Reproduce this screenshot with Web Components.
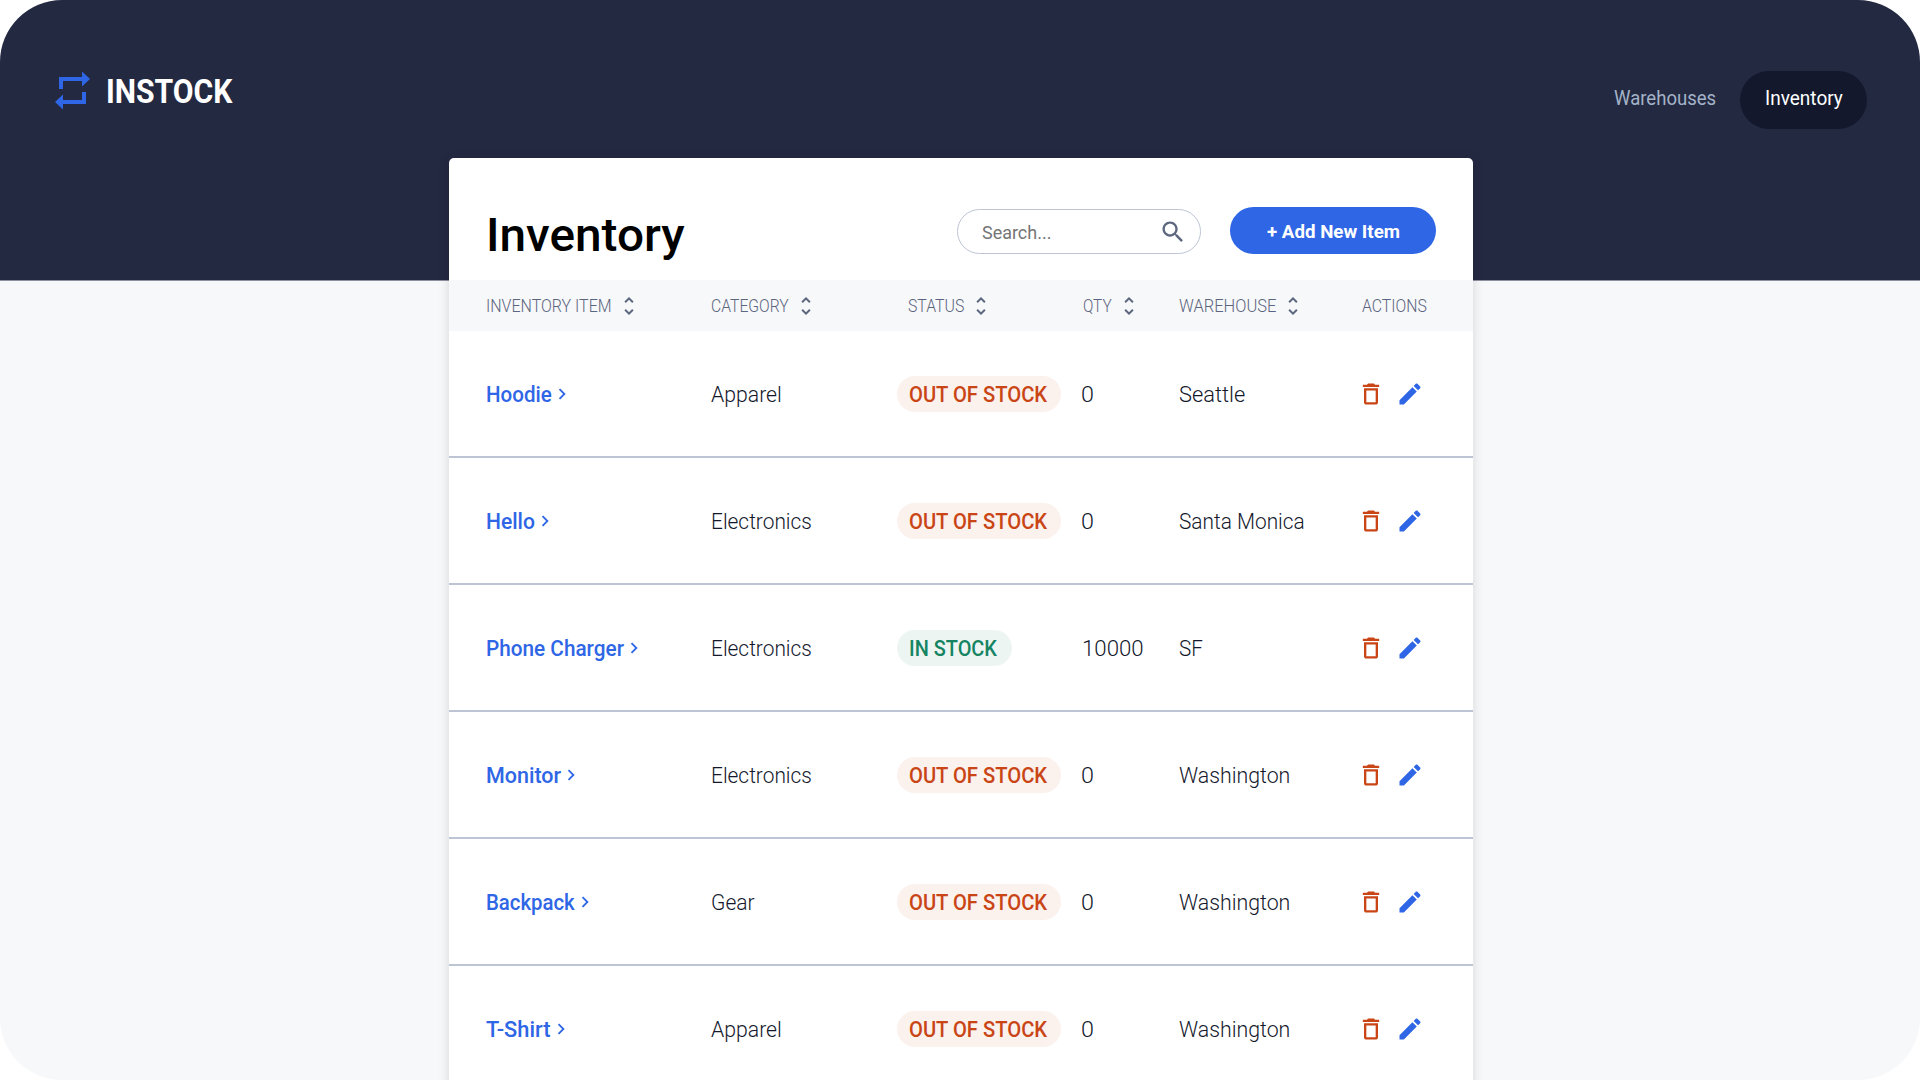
<!DOCTYPE html>
<html lang="en">
<head>
<meta charset="utf-8">
<title>InStock</title>
<style>
html,body{margin:0;height:100%;background:#fff;overflow:hidden}
body{font-family:Roboto,"Liberation Sans",sans-serif}
</style>
</head>
<body>
<instock-app></instock-app>
<script>
const define = (name, html, setup) => customElements.define(name, class extends HTMLElement {
  connectedCallback() {
    if (this.shadowRoot) return;
    const root = this.attachShadow({ mode: 'open' });
    root.innerHTML = typeof html === 'function' ? html(this) : html;
    if (setup) setup(this, root);
  }
});

// Text condensed or widened to an exact measure, given in pixels by "w".
define('fit-text', el => `<style>
:host{display:block;flex:none;width:${el.getAttribute('w')}px;white-space:nowrap;line-height:1.2}
span{display:inline-block;transform-origin:0 50%;vertical-align:top}
</style><span><slot></slot></span>`, (el, root) => {
  const span = root.querySelector('span');
  span.style.transform = `scaleX(${+el.getAttribute('w') / span.offsetWidth})`;
});

const icons = {
  sort: 'M12 5.83L15.17 9l1.41-1.41L12 3 7.41 7.59 8.83 9 12 5.83zm0 12.34L8.83 15l-1.41 1.41L12 21l4.59-4.59L15.17 15 12 18.17z',
  trash: 'M6 19c0 1.1.9 2 2 2h8c1.1 0 2-.9 2-2V7H6v12zM8 9h8v10H8V9zm7.5-5l-1-1h-5l-1 1H5v2h14V4h-3.5z',
  edit: 'M3 17.25V21h3.75L17.81 9.94l-3.75-3.75L3 17.25zM20.71 7.04c.39-.39.39-1.02 0-1.41l-2.34-2.34c-.39-.39-1.02-.39-1.41 0l-1.83 1.83 3.75 3.75 1.83-1.83z',
  chevron: 'M10 6L8.59 7.41 13.17 12l-4.58 4.59L10 18l6-6z',
  search: 'M15.5 14h-.79l-.28-.27C15.41 12.59 16 11.11 16 9.5 16 5.91 13.09 3 9.5 3S3 5.91 3 9.5 5.91 16 9.5 16c1.61 0 3.09-.59 4.23-1.57l.27.28v.79l5 4.99L20.49 19l-4.99-5zm-6 0C7.01 14 5 11.99 5 9.5S7.01 5 9.5 5 14 7.01 14 9.5 11.99 14 9.5 14z'
};
define('ui-icon', el => `<style>:host{display:block;flex:none}svg{display:block}</style>
<svg width="${el.getAttribute('size')}" height="${el.getAttribute('size')}" viewBox="0 0 24 24" fill="currentColor"><path d="${icons[el.getAttribute('name')]}"/></svg>`);

define('site-header', `<style>
:host{display:flex;justify-content:space-between;align-items:flex-start;box-sizing:border-box;height:158px;padding:71px 53px 0 55px}
.brand{display:flex;align-items:flex-start;gap:16px;color:#fff;font-size:32.500px;font-weight:700}
.brand fit-text{margin-top:2px}
nav{display:flex;align-items:flex-start;gap:24px;font-size:20px}
.link{color:#a3b3c7;margin-top:15px}
.active{display:flex;box-sizing:border-box;width:127px;height:58px;padding:15px 0 0 25px;border-radius:29px;background:#13182c;color:#fff}
</style>
<div class="brand">
<svg width="35" height="39" viewBox="0 0 35 39" fill="#2e66e6"><path d="M4 18V6h23V0.5L35 8l-8 7.500V10H8v8zM27 21h4v12H8v5.500L0 31l8-7.500V29h19z"/></svg>
<fit-text w="126">INSTOCK</fit-text></div>
<nav><fit-text class="link" w="102">Warehouses</fit-text><div class="active"><fit-text w="78">Inventory</fit-text></div></nav>`);

define('search-box', `<style>
:host{display:flex;box-sizing:border-box;width:244px;height:45px;border:1px solid #bdc5d5;border-radius:23px;padding:0 13px 0 24px;justify-content:space-between;align-items:center;color:#757575;font-size:19px}
fit-text{margin-top:4px}ui-icon{color:#5c667e}
</style><fit-text w="69">Search...</fit-text><ui-icon name="search" size="28"></ui-icon>`);

define('add-button', `<style>
:host{display:flex;width:206px;height:47px;border-radius:24px;background:#2e66e6;color:#fff;font-size:19px;font-weight:700;justify-content:center;align-items:center}
fit-text{margin-top:4px}
</style><fit-text w="133"><slot></slot></fit-text>`);

const columns = 'display:grid;grid-template-columns:225px 186px 185px 97px 183px 1fr;box-sizing:border-box;padding-left:37px';

define('table-head', () => {
  const cells = [['INVENTORY ITEM',126],['CATEGORY',78],['STATUS',56],['QTY',29],['WAREHOUSE',97],['ACTIONS',65]];
  return `<style>
:host{${columns};height:51px;background:#f7f8f9;color:#5c6580;font-size:17.500px;font-weight:350;align-items:center}
div{display:flex;align-items:center;gap:5px}
div:nth-of-type(3){padding-left:11px}
div:nth-of-type(4){padding-left:1px}
fit-text{margin-top:2px}
ui-icon{color:#5c667e}
</style>` + cells.map(([t, w], i) => `<div><fit-text w="${w}">${t}</fit-text>${i < 5 ? '<ui-icon name="sort" size="24"></ui-icon>' : ''}</div>`).join('');
});

define('stock-badge', el => {
  const inStock = el.hasAttribute('in');
  return `<style>
:host{display:flex;align-items:center;box-sizing:border-box;width:${inStock ? 115 : 164}px;height:36px;padding:1px 0 0 12px;border-radius:18px;font-weight:500;
background:${inStock ? '#edf5f2' : '#fbf1ed'};color:${inStock ? '#158463' : '#c94515'}}
</style><fit-text w="${inStock ? 88 : 138}">${inStock ? 'IN STOCK' : 'OUT OF STOCK'}</fit-text>`;
});

define('inventory-row', el => {
  const a = n => el.getAttribute(n).split('|');
  const text = (n, c = '') => { const [t, w] = a(n); return `<fit-text class="${c}" w="${w}">${t}</fit-text>`; };
  return `<style>
:host{${columns};height:127px;border-bottom:2px solid #bdc5d5;align-items:center;font-size:21.500px;color:#13182c;padding-top:1px;font-weight:330}
fit-text{margin-top:2px}
.qty{margin-left:-1px}
.name{display:flex;align-items:center;color:#2e66e6;font-weight:500}
.name ui-icon{margin:1px 0 0 -1px}
.actions{display:flex;align-items:center;gap:11px;margin:-1px 0 0 -5px}
.del{color:#c94515}.edit{color:#2e66e6}
</style>
<div class="name">${text('item')}<ui-icon name="chevron" size="22"></ui-icon></div>
${text('category')}
<stock-badge ${el.hasAttribute('in') ? 'in' : ''}></stock-badge>
${text('qty', a('qty')[0] === '0' ? 'qty' : '')}
${text('place')}
<div class="actions"><ui-icon class="del" name="trash" size="28"></ui-icon><ui-icon class="edit" name="edit" size="28"></ui-icon></div>`;
});

define('inventory-card', `<style>
:host{display:block;width:1024px;height:1000px;margin:0 0 0 449px;background:#fff;border-radius:5px 5px 0 0;box-shadow:0 2px 12px rgba(0,0,0,.14)}
.top{display:flex;box-sizing:border-box;height:122px;padding:0 36px 0 37px;align-items:flex-start}
.title{font-size:47px;font-weight:500;color:#000;margin:49px auto 0 0}
search-box{margin:51px 29px 0 0}
add-button{margin:49px 1px 0 0}
</style>
<div class="top"><fit-text class="title" w="199">Inventory</fit-text><search-box></search-box><add-button>+ Add New Item</add-button></div>
<table-head></table-head><slot></slot>`);

define('instock-app', `<style>
:host{display:block;box-sizing:border-box;width:1920px;height:1080px;overflow:hidden;border-radius:62px;background:linear-gradient(#242942 280px,#f7f8fa 281px)}
</style>
<site-header></site-header>
<inventory-card>
<inventory-row item="Hoodie|66" category="Apparel|71" qty="0|13" place="Seattle|66"></inventory-row>
<inventory-row item="Hello|49" category="Electronics|101" qty="0|13" place="Santa Monica|126"></inventory-row>
<inventory-row item="Phone Charger|138" category="Electronics|101" in qty="10000|62" place="SF|24"></inventory-row>
<inventory-row item="Monitor|75" category="Electronics|101" qty="0|13" place="Washington|111"></inventory-row>
<inventory-row item="Backpack|89" category="Gear|44" qty="0|13" place="Washington|111"></inventory-row>
<inventory-row item="T-Shirt|65" category="Apparel|71" qty="0|13" place="Washington|111"></inventory-row>
</inventory-card>`);
</script>
</body>
</html>
